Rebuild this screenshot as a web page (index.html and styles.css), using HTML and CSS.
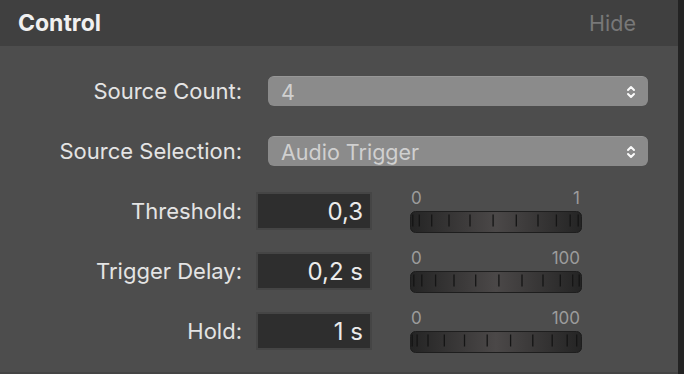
FILE: index.html
```html
<!DOCTYPE html>
<html lang="en">
<head>
<meta charset="UTF-8">
<title>Control</title>
<link rel="stylesheet" href="styles.css">
</head>
<body>
<div class="panel">
  <div class="panel-head">
    <span class="title">Control</span>
    <span class="hide">Hide</span>
  </div>

  <div class="form">
    <div class="row row-select">
      <span class="label">Source Count:</span>
      <div class="select">
        <span>4</span>
        <svg class="chev" viewBox="0 0 10 16" width="10" height="16"><path d="M2 6 L5 3 L8 6 M2 10 L5 13 L8 10" /></svg>
      </div>
    </div>

    <div class="row row-select">
      <span class="label">Source Selection:</span>
      <div class="select">
        <span>Audio Trigger</span>
        <svg class="chev" viewBox="0 0 10 16" width="10" height="16"><path d="M2 6 L5 3 L8 6 M2 10 L5 13 L8 10" /></svg>
      </div>
    </div>

    <div class="row row-knob">
      <span class="label">Threshold:</span>
      <div class="value">0,3</div>
      <div class="slider">
        <div class="scale"><span>0</span><span>1</span></div>
        <svg class="wheel" data-phase="-2" viewBox="0 0 172 22" width="172" height="22"></svg>
      </div>
    </div>

    <div class="row row-knob">
      <span class="label">Trigger Delay:</span>
      <div class="value">0,2 s</div>
      <div class="slider">
        <div class="scale"><span>0</span><span>100</span></div>
        <svg class="wheel" data-phase="2" viewBox="0 0 172 22" width="172" height="22"></svg>
      </div>
    </div>

    <div class="row row-knob">
      <span class="label">Hold:</span>
      <div class="value">1 s</div>
      <div class="slider">
        <div class="scale"><span>0</span><span>100</span></div>
        <svg class="wheel" data-phase="-6" viewBox="0 0 172 22" width="172" height="22"></svg>
      </div>
    </div>
  </div>
</div>

<script>
// jog wheels: ticks spaced like marks on a turning cylinder
document.querySelectorAll('.wheel').forEach(svg => {
  const phase = parseFloat(svg.dataset.phase);
  const cx = 86, r = 84;
  let content = '<defs><linearGradient id="g' + phase + '" x1="0" x2="1" y1="0" y2="0">' +
    '<stop offset="0" stop-color="#242424"/><stop offset="0.5" stop-color="#4b4848"/><stop offset="1" stop-color="#242424"/>' +
    '</linearGradient></defs>';
  content += '<rect x="0.5" y="0.5" width="171" height="21" rx="5" fill="url(#g' + phase + ')" stroke="#1e1e1e"></rect>';
  for (let a = phase - 16 * 6; a < 90; a += 16) {
    if (a <= -88) continue;
    const x = cx + r * Math.sin(a * Math.PI / 180);
    content += '<line x1="' + x.toFixed(1) + '" y1="3.5" x2="' + x.toFixed(1) + '" y2="15.5" stroke="#151515" stroke-width="1.3"></line>';
  }
  svg.innerHTML = content;
});
</script>
</body>
</html>
```

FILE: styles.css
```css
* { box-sizing: border-box; }
html, body {
  margin: 0;
  padding: 0;
  background: #232323;
  font-family: Inter, "Noto Sans", sans-serif;
}
.panel {
  width: 678px;
  height: 374px;
  background: #4d4d4d;
  border-bottom: 2px solid #444;
  overflow: hidden;
}
.panel-head {
  height: 46px;
  background: #404040;
  display: flex;
  align-items: center;
  justify-content: space-between;
  padding: 0 42px 0 18px;
}
.title {
  font-size: 23px;
  font-weight: 700;
  color: #f0f0f0;
}
.hide {
  font-size: 21.5px;
  color: #787878;
}
.form {
  display: flex;
  flex-direction: column;
  padding-top: 30px;
}
.row {
  display: flex;
  align-items: center;
}
.label {
  width: 242px;
  text-align: right;
  font-size: 22px;
  color: #e4e4e4;
  flex: 0 0 auto;
}
.row-select {
  height: 30px;
  margin-bottom: 30px;
}
.row-select + .row-knob { margin-top: -7px; }
.select {
  margin-left: 26px;
  width: 380px;
  height: 30px;
  border-radius: 6px;
  background: #8b8b8b;
  border-top: 1px solid #979797;
  display: flex;
  align-items: center;
  justify-content: space-between;
  padding: 0 12px 0 13px;
  font-size: 21.5px;
  color: #d0d0d0;
}
.chev {
  fill: none;
  stroke: #fafafa;
  stroke-width: 2;
  stroke-linecap: round;
  stroke-linejoin: round;
}
.row-knob {
  height: 44px;
  margin-bottom: 16px;
}
.value {
  margin-left: 14px;
  width: 116px;
  height: 38px;
  background: #2e2e2e;
  border: 2px solid #454545;
  color: #ebebeb;
  font-size: 24px;
  display: flex;
  align-items: center;
  justify-content: flex-end;
  padding-right: 7px;
}
.slider {
  margin-left: 38px;
  width: 172px;
  display: flex;
  flex-direction: column;
  gap: 3px;
}
.scale {
  display: flex;
  justify-content: space-between;
  font-size: 17px;
  line-height: 19px;
  color: #9c9c9c;
  padding: 0 2px 0 1px;
}
.wheel { display: block; }
```
